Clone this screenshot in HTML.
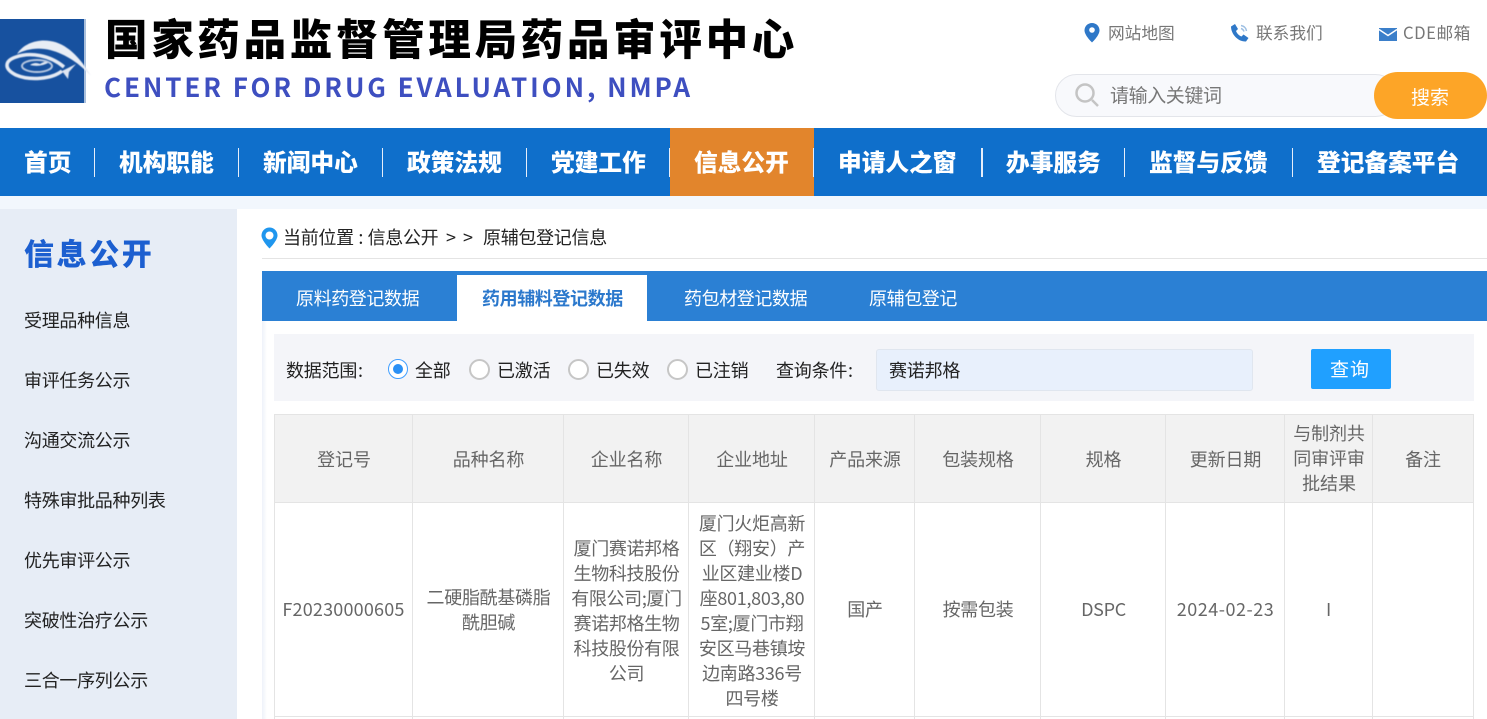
<!DOCTYPE html>
<html lang="zh-CN"><head><meta charset="utf-8"><title>原辅包登记信息</title>
<style>
html,body{margin:0;padding:0;background:#fff}
body{width:1487px;height:719px;overflow:hidden;position:relative;font-family:"Liberation Sans","Noto Sans CJK SC",sans-serif;color:#333}
.a,.t{position:absolute;white-space:nowrap}
.cj{font-family:"Noto Sans CJK SC",sans-serif}
.t{font-family:"Noto Sans CJK SC",sans-serif;line-height:1}
.nav{font-size:23.7px;font-weight:900;color:#fff;top:150px;text-align:center}
.sep{position:absolute;top:148px;width:1px;height:29px;background:#e6eefa}
.side{left:24px;font-size:18px;color:#222;letter-spacing:-.3px}
.tab{top:289px;font-size:18px;color:#fff;letter-spacing:-.4px}
.radio{position:absolute;top:359px;width:17px;height:17px;border:2px solid #c6c6c6;border-radius:50%;background:#fff}
.lab{top:361px;font-size:18px;color:#222;letter-spacing:-.2px}
.v{position:absolute;top:414px;width:1px;height:305px;background:#e4e4e4}
.th{font-size:18px;color:#666;text-align:center;top:450px;letter-spacing:-.1px}
.c{position:absolute;font-family:"Noto Sans CJK SC",sans-serif;font-size:18px;line-height:25px;color:#666;text-align:center;white-space:nowrap;letter-spacing:-.3px}
</style></head><body>

<!-- header logo -->
<div class="a" style="left:0;top:19px;width:84px;height:84px;background:#17519f"></div>
<div class="a" style="left:84px;top:19px;width:1.5px;height:84px;background:#a9bfdc"></div>
<svg class="a" style="left:0;top:19px" width="93" height="84" viewBox="0 0 93 84" fill="none">
<g style="filter:blur(.5px)">
<path d="M17 35C24 24 38 20 50 22C66 24 80 38 91 57C80 45 66 35 50 31C38 28 26 30 17 35Z" fill="#e8edf5"/>
<path d="M62 52C52 60 30 62 16 56C4 50 4 42 16 38C30 33 50 36 64 48" stroke="#e5eaf3" stroke-width="3.500"/>
<ellipse cx="37" cy="47" rx="15" ry="6" stroke="#b8c8e0" stroke-width="2"/>
<path d="M30 46C34 43 38 44 40 45C43 43 46 42 48 44C44 46 38 48 30 46Z" fill="#dfe6f1"/>
<path d="M62 52L76 45L69 53L68 60Z" fill="#dfe6f1"/>
</g></svg>
<div class="t" style="left:105px;top:17px;font-size:42.5px;font-weight:900;letter-spacing:3.7px;color:#000">国家药品监督管理局药品审评中心</div>
<div class="a cj" style="left:104px;top:68px;font-size:26px;line-height:37px;font-weight:700;letter-spacing:2.9px;color:#3e4fc0">CENTER FOR DRUG EVALUATION, NMPA</div>

<!-- top links -->
<svg class="a" style="left:1083px;top:22px" width="18" height="21" viewBox="0 0 18 21"><path d="M9 1C4.800 1 1.500 4.300 1.500 8.400C1.500 13.500 9 20.500 9 20.500S16.500 13.500 16.500 8.400C16.500 4.300 13.200 1 9 1Z" fill="#2f78c8"/><circle cx="9" cy="8" r="2.800" fill="#fff"/></svg>
<div class="t" style="left:1108px;top:24px;font-size:16.7px;color:#777">网站地图</div>
<svg class="a" style="left:1230px;top:23px" width="20" height="20" viewBox="0 0 20 20"><path d="M1 3.500L5 1L8 6L6 8C7 10.500 9 12.500 11.500 13.500L13.500 11.500L18.500 15L16 18.500C8 19 1 11 1 3.500Z" fill="#2f78c8"/><path d="M11 2.500C14 3 16 5 16.500 8M11 5.500C12.500 6 13.500 7 14 8.500" stroke="#9dbfe3" stroke-width="1.500" fill="none"/></svg>
<div class="t" style="left:1256px;top:24px;font-size:16.7px;color:#777">联系我们</div>
<svg class="a" style="left:1379px;top:28px" width="18" height="13" viewBox="0 0 18 13"><rect width="18" height="13" fill="#3b7fca"/><path d="M0 1.500L9 7.500L18 1.500" stroke="#fff" stroke-width="1.500" fill="none"/></svg>
<div class="a cj" style="left:1403px;top:21px;font-size:16.7px;line-height:23px;letter-spacing:.5px;color:#777">CDE邮箱</div>

<!-- search -->
<div class="a" style="left:1055px;top:74px;width:340px;height:41px;border:1px solid #e3e5ea;border-radius:22px;background:#f8f9fc"></div>
<svg class="a" style="left:1074px;top:82px" width="26" height="26" viewBox="0 0 26 26" fill="none"><circle cx="11" cy="11" r="8.500" stroke="#c4c4c4" stroke-width="2.500"/><path d="M18 18L24 24" stroke="#c4c4c4" stroke-width="2.500"/></svg>
<div class="t" style="left:1110px;top:85px;font-size:19px;color:#777;letter-spacing:-.4px">请输入关键词</div>
<div class="a" style="left:1374px;top:72px;width:113px;height:47px;border-radius:24px;background:#fda527"></div>
<div class="t" style="left:1411px;top:87px;font-size:19px;color:#fff">搜索</div>

<!-- nav -->
<div class="a" style="left:0;top:128px;width:1487px;height:68px;background:#0f6fcb"></div>
<div class="a" style="left:670px;top:128px;width:144px;height:68px;background:#e2852c"></div>
<div class="sep" style="left:94px"></div><div class="sep" style="left:238px"></div><div class="sep" style="left:382px"></div><div class="sep" style="left:526px"></div><div class="sep" style="left:669px"></div><div class="sep" style="left:813px"></div><div class="sep" style="left:981px;width:2px"></div><div class="sep" style="left:1124px"></div><div class="sep" style="left:1292px"></div>
<div class="t nav" style="left:24px">首页</div>
<div class="t nav" style="left:119px">机构职能</div>
<div class="t nav" style="left:263px">新闻中心</div>
<div class="t nav" style="left:407px">政策法规</div>
<div class="t nav" style="left:551px">党建工作</div>
<div class="t nav" style="left:694px">信息公开</div>
<div class="t nav" style="left:838px">申请人之窗</div>
<div class="t nav" style="left:1006px">办事服务</div>
<div class="t nav" style="left:1149px">监督与反馈</div>
<div class="t nav" style="left:1317px">登记备案平台</div>

<!-- band + sidebar -->
<div class="a" style="left:0;top:196px;width:1487px;height:13px;background:#f2f7fd"></div>
<div class="a" style="left:0;top:209px;width:237px;height:510px;background:#e7edf6"></div>
<div class="t" style="left:24px;top:237px;font-size:30px;font-weight:900;letter-spacing:2.6px;color:#1c5fd0">信息公开</div>
<div class="t side" style="top:311px">受理品种信息</div>
<div class="t side" style="top:371px">审评任务公示</div>
<div class="t side" style="top:431px">沟通交流公示</div>
<div class="t side" style="top:491px">特殊审批品种列表</div>
<div class="t side" style="top:551px">优先审评公示</div>
<div class="t side" style="top:611px">突破性治疗公示</div>
<div class="t side" style="top:671px">三合一序列公示</div>

<!-- breadcrumb -->
<svg class="a" style="left:261px;top:227px" width="17" height="22" viewBox="0 0 17 22"><path d="M8.500 .5C4 .5 .5 4 .5 8.500C.5 13.500 8.500 21.500 8.500 21.500S16.500 13.500 16.500 8.500C16.500 4 13 .5 8.500 .5Z" fill="#1f96ee"/><circle cx="8.500" cy="8.500" r="4" fill="#fff"/></svg>
<div class="t" style="left:283px;top:228px;font-size:18px;color:#222;letter-spacing:-.3px;word-spacing:.8px">当前位置 : 信息公开</div>
<div class="t" style="left:446px;top:228px;font-size:18px;color:#222">&gt;</div>
<div class="t" style="left:463px;top:228px;font-size:18px;color:#222">&gt;</div>
<div class="t" style="left:483px;top:228px;font-size:18px;color:#222;letter-spacing:-.3px">原辅包登记信息</div>
<div class="a" style="left:262px;top:258px;width:1225px;height:1px;background:#e4e4e4"></div>

<!-- tabs -->
<div class="a" style="left:262px;top:321px;width:5px;height:398px;background:linear-gradient(90deg,#eef2f9,#fff)"></div>
<div class="a" style="left:262px;top:271px;width:1225px;height:50px;background:#2b80d4"></div>
<div class="a" style="left:457px;top:275px;width:190px;height:46px;background:#fff"></div>
<div class="t tab" style="left:296px">原料药登记数据</div>
<div class="t tab" style="left:482px;color:#2b78cc;font-weight:700">药用辅料登记数据</div>
<div class="t tab" style="left:684px">药包材登记数据</div>
<div class="t tab" style="left:869px">原辅包登记</div>

<!-- filter -->
<div class="a" style="left:274px;top:334px;width:1200px;height:67px;background:#f4f5f9"></div>
<div class="t lab" style="left:286px;word-spacing:-3px">数据范围 :</div>
<div class="radio" style="left:388px;border:1.500px solid #409eff;width:18px;height:18px"></div>
<div class="a" style="left:393px;top:364px;width:10px;height:10px;border-radius:50%;background:#2a90f5"></div>
<div class="t lab" style="left:415px">全部</div>
<div class="radio" style="left:469px"></div><div class="t lab" style="left:497px">已激活</div>
<div class="radio" style="left:568px"></div><div class="t lab" style="left:596px">已失效</div>
<div class="radio" style="left:667px"></div><div class="t lab" style="left:695px">已注销</div>
<div class="t lab" style="left:776px;word-spacing:-3px">查询条件 :</div>
<div class="a" style="left:876px;top:349px;width:375px;height:40px;background:#e8f0fc;border:1px solid #e0e6ef;border-radius:3px"></div>
<div class="t lab" style="left:889px">赛诺邦格</div>
<div class="a" style="left:1311px;top:349px;width:80px;height:40px;background:#20a0ff;border-radius:2px"></div>
<div class="t" style="left:1330px;top:359px;font-size:19px;letter-spacing:1px;color:#fff">查询</div>

<!-- table -->
<div class="a" style="left:274px;top:414px;width:1199px;height:88px;background:#f2f2f2"></div>
<div class="a" style="left:274px;top:414px;width:1200px;height:1px;background:#e4e4e4"></div>
<div class="a" style="left:274px;top:502px;width:1200px;height:1px;background:#e4e4e4"></div>
<div class="a" style="left:274px;top:716px;width:1200px;height:1px;background:#e4e4e4"></div>
<div class="v" style="left:274px"></div><div class="v" style="left:412px"></div><div class="v" style="left:563px"></div><div class="v" style="left:688px"></div><div class="v" style="left:814px"></div><div class="v" style="left:914px"></div><div class="v" style="left:1040px"></div><div class="v" style="left:1165px"></div><div class="v" style="left:1284px"></div><div class="v" style="left:1372px"></div><div class="v" style="left:1473px"></div>

<div class="t th" style="left:275px;width:138px">登记号</div>
<div class="t th" style="left:413px;width:151px">品种名称</div>
<div class="t th" style="left:564px;width:125px">企业名称</div>
<div class="t th" style="left:689px;width:126px">企业地址</div>
<div class="t th" style="left:815px;width:100px">产品来源</div>
<div class="t th" style="left:915px;width:126px">包装规格</div>
<div class="t th" style="left:1041px;width:125px">规格</div>
<div class="t th" style="left:1166px;width:119px">更新日期</div>
<div class="c" style="left:1285px;width:88px;top:421px;letter-spacing:-.1px">与制剂共<br>同审评审<br>批结果</div>
<div class="t th" style="left:1373px;width:100px">备注</div>

<div class="c" style="left:275px;width:137px;top:597px;letter-spacing:.2px">F20230000605</div>
<div class="c" style="left:413px;width:151px;top:585px">二硬脂酰基磷脂<br>酰胆碱</div>
<div class="c" style="left:564px;width:125px;top:536px;letter-spacing:-.35px">厦门赛诺邦格<br>生物科技股份<br>有限公司;厦门<br>赛诺邦格生物<br>科技股份有限<br>公司</div>
<div class="c" style="left:689px;width:126px;top:511px">厦门火炬高新<br>区（翔安）产<br>业区建业楼D<br>座801,803,80<br>5室;厦门市翔<br>安区马巷镇垵<br>边南路336号<br>四号楼</div>
<div class="c" style="left:815px;width:100px;top:597px">国产</div>
<div class="c" style="left:915px;width:126px;top:597px">按需包装</div>
<div class="c" style="left:1041px;width:125px;top:597px">DSPC</div>
<div class="c" style="left:1166px;width:119px;top:597px;letter-spacing:.5px">2024-02-23</div>
<div class="c" style="left:1285px;width:87px;top:597px">I</div>
</body></html>
